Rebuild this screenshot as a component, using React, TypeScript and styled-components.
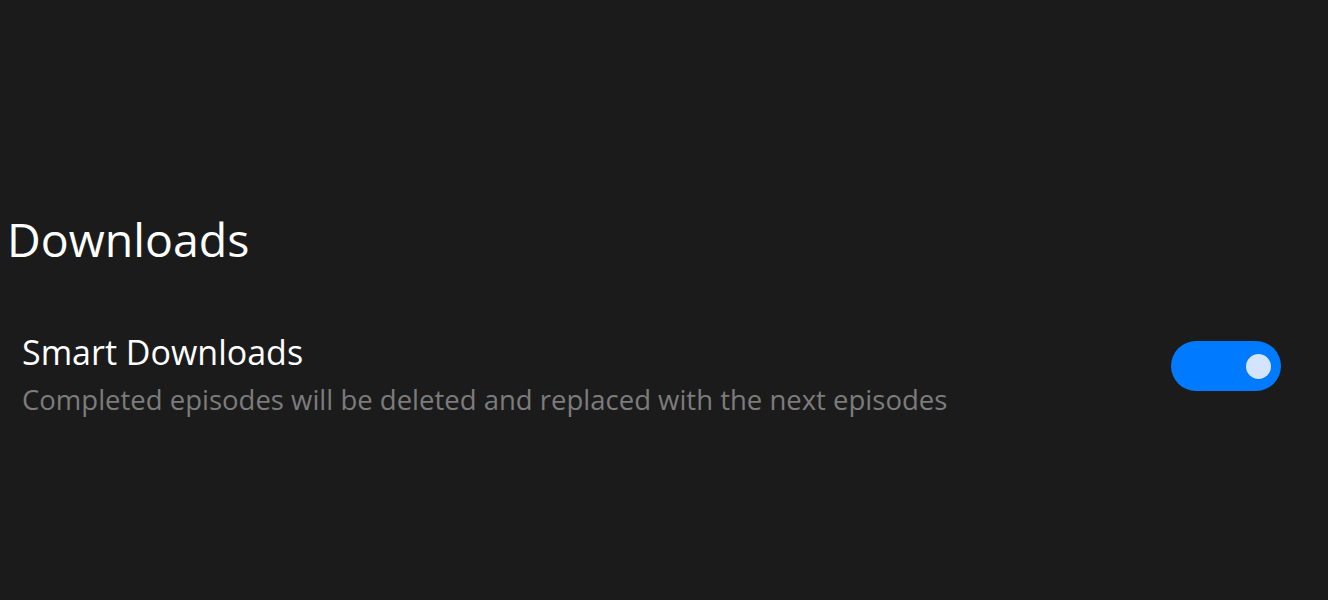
import React, { useState } from 'react';
import styled, { createGlobalStyle } from 'styled-components';

const GlobalStyle = createGlobalStyle`
  html, body {
    margin: 0;
    padding: 0;
    background: #1b1b1b;
    font-family: 'Open Sans', 'Noto Sans', sans-serif;
  }
`;

const Page = styled.div`
  height: 600px;
  padding: 208px 47px 0 7px;
  box-sizing: border-box;
  background: #1b1b1b;
`;

const SectionTitle = styled.h1`
  margin: 0 0 60px 0;
  font-size: 46.5px;
  font-weight: 400;
  line-height: 62px;
  color: #ffffff;
`;

const Row = styled.div`
  display: flex;
  justify-content: space-between;
  align-items: flex-start;
  padding-left: 15px;
`;

const RowText = styled.div`
  display: flex;
  flex-direction: column;
`;

const RowTitle = styled.span`
  font-size: 34px;
  line-height: 44px;
  color: #ffffff;
`;

const RowHint = styled.span`
  margin-top: 7px;
  font-size: 27.5px;
  line-height: 38px;
  color: #7c7c7c;
`;

const Switch = styled.button<{ $on: boolean }>`
  display: flex;
  align-items: center;
  justify-content: ${({ $on }) => ($on ? 'flex-end' : 'flex-start')};
  width: 110px;
  height: 50px;
  margin-top: 11px;
  padding: 0 10px;
  border: none;
  border-radius: 25px;
  background: ${({ $on }) => ($on ? '#007aff' : '#444')};
  cursor: pointer;
`;

const Knob = styled.span`
  display: block;
  width: 25px;
  height: 25px;
  border-radius: 50%;
  background: #d4e4ff;
`;

export default function App() {
  const [on, setOn] = useState(true);
  return (
    <>
      <GlobalStyle />
      <Page>
        <SectionTitle>Downloads</SectionTitle>
        <Row>
          <RowText>
            <RowTitle>Smart Downloads</RowTitle>
            <RowHint>Completed episodes will be deleted and replaced with the next episodes</RowHint>
          </RowText>
          <Switch $on={on} onClick={() => setOn(!on)} aria-label="Smart Downloads">
            <Knob />
          </Switch>
        </Row>
      </Page>
    </>
  );
}
